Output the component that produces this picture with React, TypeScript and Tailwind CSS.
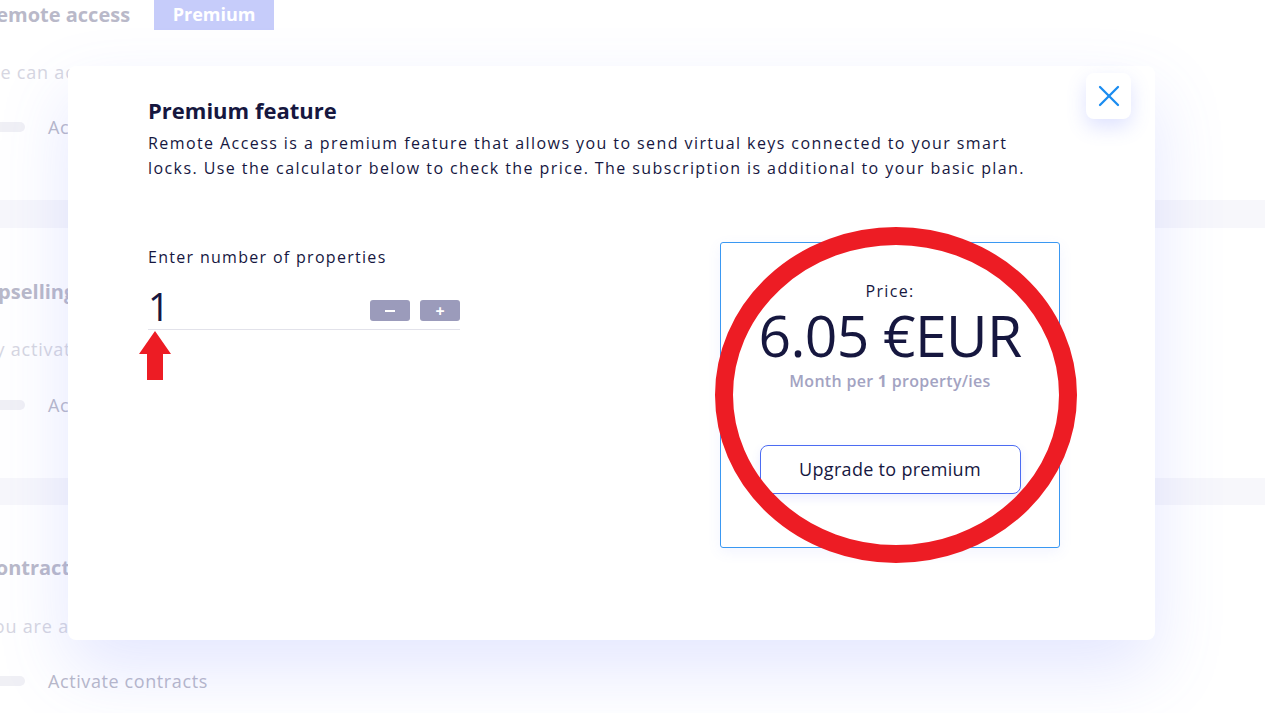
import { X } from 'lucide-react'

const font = { fontFamily: '"Open Sans", "Liberation Sans", sans-serif' }

function BgSection({ title, desc, toggle, badge, headMt, descMt, toggleMt }: {
  title: string
  desc: string
  toggle: string
  badge?: boolean
  headMt: string
  descMt: string
  toggleMt: string
}) {
  return (
    <div className="flex flex-col">
      <div className={`${headMt} flex items-center h-[30px]`}>
        <span className="-ml-[17px] text-[20px] font-bold text-[#b9b9c9] leading-[30px]">{title}</span>
        {badge && (
          <span className="ml-[24px] -mt-[1px] h-[30px] w-[120px] bg-[#c6ccfa] text-white font-bold text-[18px] flex items-center justify-center">
            Premium
          </span>
        )}
      </div>
      <div className={`${descMt} h-[24px] leading-[24px] text-[18px] text-[#d6d6e1] -ml-[17px] whitespace-nowrap tracking-[0.8px]`}>{desc}</div>
      <div className={`${toggleMt} h-[24px] flex items-center`}>
        <span className="-ml-[15px] w-[40px] h-[10px] rounded-full bg-[#f0f0f5]" />
        <span className="ml-[23px] text-[18px] text-[#b9b9c9] leading-[24px] tracking-[0.6px]">{toggle}</span>
      </div>
    </div>
  )
}

function Background() {
  return (
    <div className="absolute inset-0 flex flex-col">
      <BgSection
        title="Remote access"
        desc="We can activate remote access"
        toggle="Activate remote access"
        badge
        headMt="mt-0"
        descMt="mt-[30px]"
        toggleMt="mt-[31px]"
      />
      <div className="mt-[61px] h-[28px] bg-[#f7f7fb]" />
      <BgSection
        title="Upselling"
        desc="By activating upselling"
        toggle="Activate upselling"
        headMt="mt-[49px]"
        descMt="mt-[30px]"
        toggleMt="mt-[32px]"
      />
      <div className="mt-[61px] h-[27px] bg-[#f7f7fb]" />
      <BgSection
        title="Contracts"
        desc="You are able to activate contracts"
        toggle="Activate contracts"
        headMt="mt-[48px]"
        descMt="mt-[31px]"
        toggleMt="mt-[31px]"
      />
    </div>
  )
}

function Stepper() {
  return (
    <div className="mb-[8px] flex gap-[10px]">
      <button className="w-[40px] h-[21px] rounded-[3px] bg-[#9b9bbb] flex items-center justify-center">
        <span className="w-[10px] h-[2px] bg-white" />
      </button>
      <button className="w-[40px] h-[21px] rounded-[3px] bg-[#9b9bbb] flex items-center justify-center text-white text-[16px] font-bold leading-none">
        +
      </button>
    </div>
  )
}

function PriceBox() {
  return (
    <div className="w-[340px] h-[306px] border border-[#3a98f2] rounded-[3px] shadow-[0_4px_14px_rgba(92,110,255,0.08)] flex flex-col items-center">
      <div className="mt-[36px] text-[16px] leading-[24px] tracking-[1.3px] text-[#16173f]">Price:</div>
      <div className="mt-[2px] text-[57px] leading-[60px] text-[#16173f] tracking-[-0.6px]">6.05 €EUR</div>
      <div className="mt-[4px] text-[16px] leading-[24px] font-semibold tracking-[0.3px] text-[#a3a3c2]">
        Month per <span className="font-bold">1</span> property/ies
      </div>
      <button className="mt-[52px] w-[261px] h-[49px] rounded-[8px] border border-[#4c6cf2] text-[18px] tracking-[0.3px] text-[#16173f] shadow-[0_4px_10px_rgba(92,110,255,0.12)]">
        Upgrade to premium
      </button>
    </div>
  )
}

export default function App() {
  return (
    <div className="relative w-[1265px] h-[713px] overflow-hidden bg-white" style={font}>
      <Background />

      {/* modal */}
      <div className="absolute left-[68px] top-[66px] w-[1087px] h-[574px] bg-white rounded-[8px] shadow-[0_30px_70px_rgba(92,110,255,0.17)] pl-[80px] pt-[30px]">
        <button className="absolute right-[24px] top-[7px] w-[45px] h-[46px] rounded-[8px] bg-white shadow-[0_8px_20px_rgba(92,110,255,0.2)] flex items-center justify-center">
          <X className="w-[36px] h-[36px] text-[#1a8cf0]" strokeWidth={1.5} />
        </button>

        <h2 className="text-[22px] leading-[28px] font-bold text-[#16173f]">Premium feature</h2>
        <p className="mt-[7px] w-[885px] text-[16px] leading-[25px] tracking-[1.42px] text-[#16173f]">
          Remote Access is a premium feature that allows you to send virtual keys connected to your smart locks. Use the calculator below to check the price. The subscription is additional to your basic plan.
        </p>

        <div className="mt-[61px] flex">
          <div className="w-[312px] pt-[3px]">
            <div className="text-[16px] leading-[24px] tracking-[1.3px] text-[#16173f]">Enter number of properties</div>
            <div className="relative mt-[14px] h-[47px] flex items-end justify-between border-b border-[#e2e2ea]">
              <span className="text-[38px] leading-[46px] text-[#16173f]">1</span>
              <Stepper />
              {/* annotation arrow */}
              <svg className="absolute left-[-9px] top-[48px]" width="32" height="49" viewBox="0 0 32 49">
                <path d="M16 0 L32 23 L24 23 L24 49 L8 49 L8 23 L0 23 Z" fill="#ed1c24" />
              </svg>
            </div>
          </div>
          <div className="ml-[260px]">
            <PriceBox />
          </div>
        </div>
      </div>

      {/* annotation ellipse */}
      <svg className="absolute left-[715px] top-[227px]" width="362" height="336" viewBox="0 0 362 336">
        <ellipse cx="181" cy="168" rx="172" ry="159" fill="none" stroke="#ed1c24" strokeWidth="18" />
      </svg>
    </div>
  )
}
